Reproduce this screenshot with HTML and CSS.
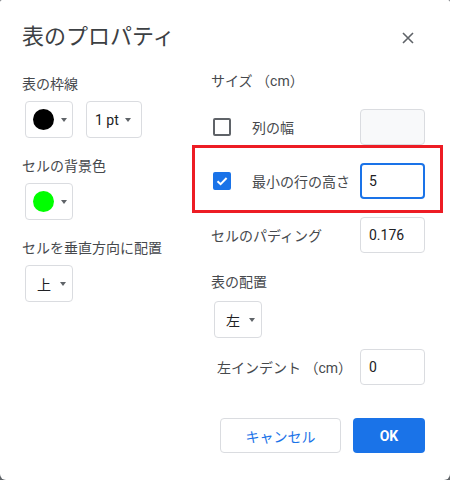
FILE: index.html
```html
<!DOCTYPE html>
<html lang="ja">
<head>
  <meta charset="UTF-8" />
  <meta name="viewport" content="width=device-width, initial-scale=1.0"/>
  <title>表のプロパティ</title>
  <link rel="stylesheet" href="styles.css">
</head>
<body>
  <div class="dialog">
    <div class="dialog-header">
      <h1>表のプロパティ</h1>
      <button class="close-btn" aria-label="閉じる">
        <svg width="12" height="12" viewBox="0 0 12 12"><path d="M1 1L11 11M11 1L1 11" stroke="#5f6368" stroke-width="1.6"/></svg>
      </button>
    </div>

    <div class="dialog-body">
      <div class="col-left">
        <div class="group">
          <div class="label">表の枠線</div>
          <div class="btn-row">
            <button class="select select-color"><span class="swatch swatch-black"></span><span class="caret"></span></button>
            <button class="select select-pt">1 pt<span class="caret"></span></button>
          </div>
        </div>
        <div class="group">
          <div class="label">セルの背景色</div>
          <div class="btn-row">
            <button class="select select-color"><span class="swatch swatch-green"></span><span class="caret"></span></button>
          </div>
        </div>
        <div class="group">
          <div class="label">セルを垂直方向に配置</div>
          <div class="btn-row">
            <button class="select select-text">上<span class="caret"></span></button>
          </div>
        </div>
      </div>

      <div class="col-right">
        <div class="label label-size">サイズ （cm）</div>

        <div class="field-row">
          <span class="checkbox"></span>
          <span class="field-label">列の幅</span>
          <input class="num-input" type="text" disabled>
        </div>

        <div class="field-row highlighted">
          <span class="checkbox checked">
            <svg width="14" height="14" viewBox="0 0 14 14"><path d="M2.5 7.2L5.6 10.2L11.6 4" fill="none" stroke="#fff" stroke-width="2"/></svg>
          </span>
          <span class="field-label">最小の行の高さ</span>
          <input class="num-input focused" type="text" value="5">
        </div>

        <div class="field-row">
          <span class="field-label plain">セルのパディング</span>
          <input class="num-input" type="text" value="0.176">
        </div>

        <div class="label label-align">表の配置</div>
        <div class="btn-row">
          <button class="select select-text select-left">左<span class="caret"></span></button>
        </div>

        <div class="field-row indent-row">
          <span class="field-label plain indent">左インデント （cm）</span>
          <input class="num-input" type="text" value="0">
        </div>
      </div>
    </div>

    <div class="dialog-footer">
      <button class="btn btn-cancel">キャンセル</button>
      <button class="btn btn-ok">OK</button>
    </div>
  </div>
</body>
</html>
```

FILE: styles.css
```css
:root {
  --text: #46494d;
  --title: #202124;
  --grey: #5f6368;
  --border: #dadce0;
  --blue: #1a73e8;
  --red: #ed1c24;
}

* {
  margin: 0;
  padding: 0;
  box-sizing: border-box;
  font-family: Roboto, "Noto Sans CJK JP", sans-serif;
}

body {
  background-color: #5f6368;
  width: 450px;
  height: 480px;
  overflow: hidden;
}

.dialog {
  width: 450px;
  height: 480px;
  background-color: #fff;
  border-radius: 2px 2px 6px 6px;
  padding: 21px 25px 0 22px;
}

.dialog-header {
  display: flex;
  justify-content: space-between;
  align-items: center;
  height: 32px;
}

h1 {
  font-size: 22px;
  font-weight: 400;
  line-height: 32px;
  color: #3c4043;
}

.close-btn {
  border: none;
  background: none;
  width: 12px;
  height: 12px;
  margin-right: 11px;
  margin-top: 2px;
  display: flex;
}

.dialog-body {
  display: flex;
  margin-top: 21px;
}

.col-left {
  width: 189px;
  display: flex;
  flex-direction: column;
  gap: 18px;
}

.col-right {
  flex: 1;
  display: flex;
  flex-direction: column;
}

.label {
  font-size: 14px;
  line-height: 20px;
  color: var(--text);
}

.group .label {
  margin-bottom: 7px;
}

.btn-row {
  display: flex;
  gap: 13px;
  padding-left: 3px;
}

.select {
  height: 37px;
  border: 1px solid var(--border);
  border-radius: 4px;
  background-color: #fff;
  display: flex;
  align-items: center;
  font-size: 14px;
  color: var(--title);
}

.caret {
  width: 0;
  height: 0;
  border-left: 3.5px solid transparent;
  border-right: 3.5px solid transparent;
  border-top: 4px solid var(--grey);
}

.select-color {
  width: 48px;
  padding-left: 7px;
  gap: 7px;
}

.swatch {
  width: 21px;
  height: 21px;
  border-radius: 50%;
}

.swatch-black {
  background-color: #000;
}

.swatch-green {
  background-color: #00ff00;
}

.select-pt {
  width: 56px;
  padding-left: 8px;
  gap: 6px;
}

.select-text {
  width: 48px;
  padding-left: 11px;
  gap: 9px;
}

.label-size {
  margin-top: -3px;
  margin-bottom: 18px;
}

.field-row {
  display: flex;
  align-items: center;
  height: 36px;
  margin-bottom: 18px;
  position: relative;
}

.field-row.highlighted::after {
  content: "";
  position: absolute;
  left: -19px;
  right: -18px;
  top: -18px;
  bottom: -14px;
  border: 3px solid var(--red);
}

.checkbox {
  width: 18px;
  height: 18px;
  margin-left: 2px;
  border: 2px solid var(--grey);
  border-radius: 2px;
  display: flex;
  align-items: center;
  justify-content: center;
}

.checkbox.checked {
  background-color: var(--blue);
  border-color: var(--blue);
}

.field-label {
  font-size: 14px;
  color: var(--text);
  margin-left: 21px;
  flex: 1;
}

.field-label.plain {
  margin-left: 0;
}

.field-label.indent {
  margin-left: 6px;
}

.num-input {
  width: 65px;
  height: 36px;
  border: 1px solid var(--border);
  border-radius: 4px;
  padding: 0 8px;
  font-size: 14px;
  color: var(--title);
  background-color: #fff;
}

.num-input:disabled {
  background-color: #f8f9fa;
}

.num-input.focused {
  border: 2px solid var(--blue);
  padding: 0 7px;
}

.label-align {
  margin-top: 1px;
  margin-bottom: 9px;
}

.select-left {
  margin-left: 0;
}

.indent-row {
  margin-top: 11px;
}

.dialog-footer {
  display: flex;
  justify-content: flex-end;
  gap: 12px;
  margin-top: 15px;
}

.btn {
  height: 35px;
  border-radius: 4px;
  font-size: 14px;
}

.btn-cancel {
  width: 121px;
  border: 1px solid var(--border);
  background-color: #fff;
  color: var(--blue);
}

.btn-ok {
  width: 72px;
  border: none;
  background-color: var(--blue);
  color: #fff;
  font-weight: 700;
}
```
